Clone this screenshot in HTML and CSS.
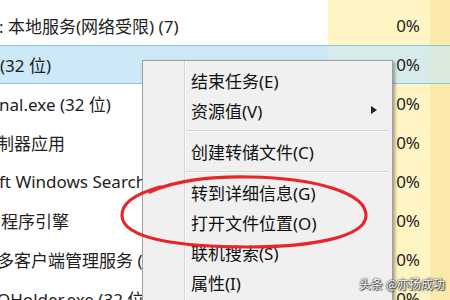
FILE: index.html
```html
<!DOCTYPE html>
<html lang="zh-CN">
<head>
    <meta charset="UTF-8">
    <title>任务管理器 - 右键菜单</title>
    <link rel="stylesheet" href="styles.css">
</head>
<body>
    <div class="screen">
        <div class="list">
            <div class="row"><span class="name">服务主机: 本地系统</span><span class="cpu">0%</span><span class="mem"></span></div>
            <div class="row"><span class="name">: 本地服务(网络受限) (7)</span><span class="cpu">0%</span><span class="mem"></span></div>
            <div class="row selected"><span class="name">(32 位)</span><span class="cpu">0%</span><span class="mem"></span></div>
            <div class="row"><span class="name">nal.exe (32 位)</span><span class="cpu">0%</span><span class="mem"></span></div>
            <div class="row"><span class="name cut">控制器应用</span><span class="cpu">0%</span><span class="mem"></span></div>
            <div class="row"><span class="name">ft Windows Search Indexer</span><span class="cpu">0%</span><span class="mem"></span></div>
            <div class="row"><span class="name indent">程序引擎</span><span class="cpu">0%</span><span class="mem"></span></div>
            <div class="row"><span class="name nudge">多客户端管理服务 (32 位)</span><span class="cpu">0%</span><span class="mem"></span></div>
            <div class="row"><span class="name nudge">OHolder.exe (32 位)</span><span class="cpu">0%</span><span class="mem"></span></div>
        </div>

        <div class="menu">
            <div class="item">结束任务(E)</div>
            <div class="item">资源值(V)<span class="arrow"></span></div>
            <div class="sep"></div>
            <div class="item">创建转储文件(C)</div>
            <div class="sep"></div>
            <div class="item">转到详细信息(G)</div>
            <div class="item">打开文件位置(O)</div>
            <div class="item">联机搜索(S)</div>
            <div class="item">属性(I)</div>
        </div>

        <!-- red marker circle drawn by hand over the screenshot -->
        <svg class="marker" width="450" height="300" viewBox="0 0 450 300">
            <path d="M150 192 C 175 180, 215 176, 250 177 C 315 178, 367 193, 366 216 C 365 237, 312 247, 248 247 C 185 247, 123 240, 122 216 C 121 203, 135 194, 160 187"
                  fill="none" stroke="#e8262a" stroke-width="3.2" stroke-linecap="round"/>
        </svg>

        <div class="watermark">头条 @亦扬成功</div>
    </div>
</body>
</html>
```

FILE: styles.css
```css
body {
    margin: 0;
    background: #fff;
    font-family: "Noto Sans", "Noto Sans CJK SC", sans-serif;
    color: #1e1e1e;
}

.screen {
    position: relative;
    width: 450px;
    height: 300px;
    overflow: hidden;
}

/* process list */
.list {
    margin-top: -33px;
}

.row {
    display: grid;
    grid-template-columns: 328px 102px 1fr;
    height: 39px;
    font-size: 17px;
}

.name {
    display: flex;
    align-items: center;
    white-space: nowrap;
    overflow: hidden;
    margin-left: -1px;
}

.name.cut {
    margin-left: -20px;
}

.name.indent {
    margin-left: 1px;
}

.name.nudge {
    margin-left: -3px;
}

.cpu {
    display: flex;
    align-items: center;
    justify-content: flex-end;
    padding-right: 10px;
    background: #fff4c4;
}

.mem {
    background: #fbeaab;
}

.row.selected {
    border-top: 1px solid #86c6e6;
    border-bottom: 1px solid #86c6e6;
    box-sizing: border-box;
}

.row.selected .name {
    background: #cde8f6;
    margin-left: 0;
    padding-left: 0;
}

.row.selected .cpu {
    background: #d7ecea;
}

.row.selected .mem {
    background: #dbeadb;
}

/* context menu */
.menu {
    position: absolute;
    left: 142px;
    top: 60px;
    width: 249px;
    height: 260px;
    padding-top: 4px;
    background-color: #f0f0f0;
    background-image: linear-gradient(to right, transparent 41px, #d8d8d8 41px, #d8d8d8 42px, #fbfbfb 42px, #fbfbfb 43px, transparent 43px);
    border: 1px solid #a0a0a0;
    box-shadow: 2px 2px 3px rgba(0, 0, 0, 0.35);
    font-size: 17px;
    color: #111;
}

.item {
    display: flex;
    align-items: center;
    height: 30px;
    padding-left: 48px;
    white-space: nowrap;
}

.arrow {
    margin-left: auto;
    margin-right: 15px;
    width: 0;
    height: 0;
    border-top: 4px solid transparent;
    border-bottom: 4px solid transparent;
    border-left: 6px solid #222;
}

.sep {
    height: 1px;
    margin: 5px 3px 5px 43px;
    background: #d5d5d5;
    box-shadow: 0 1px 0 #fcfcfc;
}

/* overlays */
.marker {
    position: absolute;
    left: 0;
    top: 0;
    pointer-events: none;
}

.watermark {
    position: absolute;
    left: 359px;
    top: 275px;
    font-family: "Noto Sans CJK SC", sans-serif;
    font-size: 12px;
    color: #fff;
    text-shadow: 0 0 1px #333, 0 0 2px #333, 1px 1px 1px #444;
    white-space: nowrap;
}
```
